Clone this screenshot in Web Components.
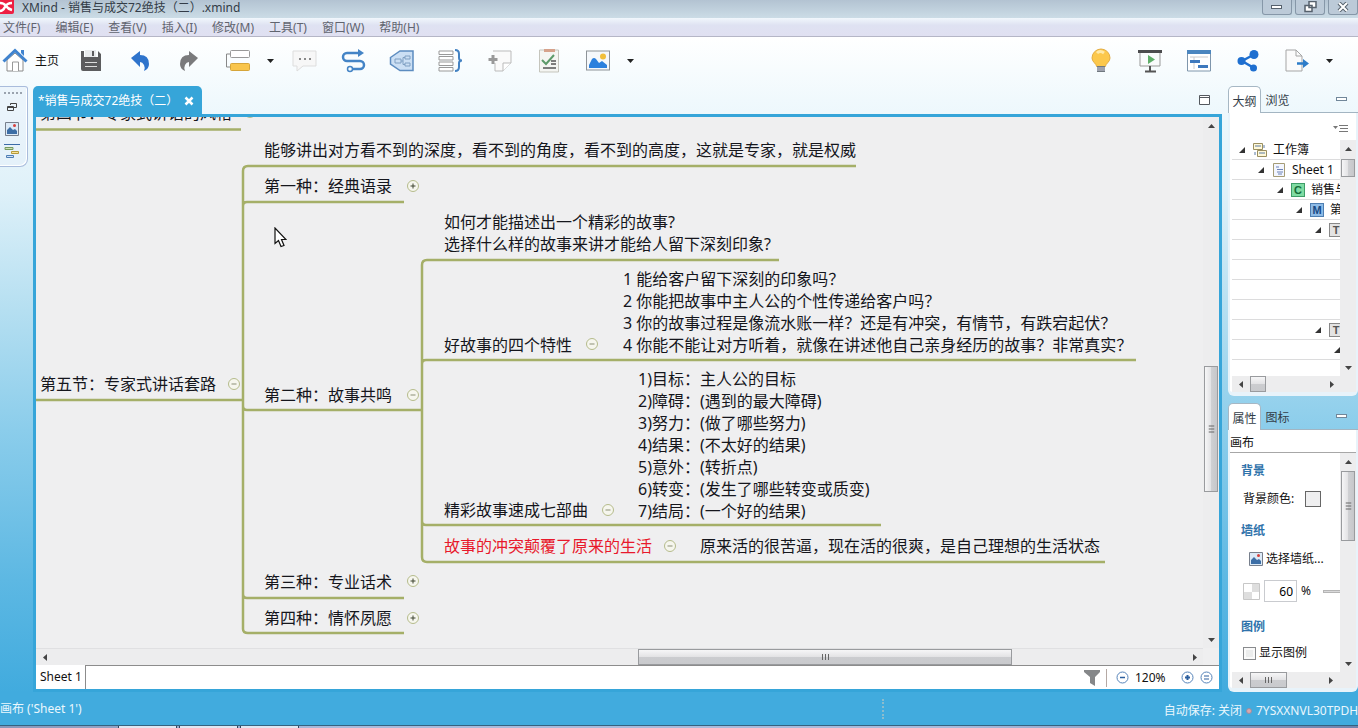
<!DOCTYPE html>
<html lang="zh-CN">
<head>
<meta charset="utf-8">
<title>XMind - 销售与成交72绝技（二）.xmind</title>
<style>
html,body{height:100%}
body{margin:0;font:12px/18px "Noto Sans","Noto Sans CJK SC",sans-serif;color:#111;overflow:hidden}
</style>
</head>
<body>
<mind-app></mind-app>
<script>
const define = (name, html, init) => customElements.define(name, class extends HTMLElement {
  constructor() {
    super();
    const t = document.createElement('template');
    t.innerHTML = `<style>*{box-sizing:border-box}button{font:inherit;color:inherit;border:0;background:none;padding:0;margin:0}svg{display:block;flex:none}</style>` + html;
    this.attachShadow({mode: 'open'}).append(t.content.cloneNode(true));
    if (init) init.call(this, this.shadowRoot);
  }
});

const icons = {
  home: '<path d="M5 12v11h16V12L13 5z" fill="#fff" stroke="#8a8a8a"/><path d="M10.500 23v-9h6v9" fill="#fff" stroke="#999"/><path d="M1.500 13.500L13 2.500l11.500 11" fill="none" stroke="#3f83cf" stroke-width="3"/><path d="M19 2h3v6l-3-3z" fill="#3f83cf"/>',
  save: '<path d="M3 3h3v7h14V3l3 3v17H5q-2 0-2-2z" fill="#5c5c5e"/><path d="M7 2h11v7H7z" fill="#e9ebed"/><path d="M14 3h2v5h-2z" fill="#5c5c5e"/><path d="M5 9h16v2H5z" fill="#5c5c5e"/><path d="M7 14h12v1H7zM7 18h12v1H7z" fill="#ddd"/>',
  undo: '<path d="M4 10L13 3v4q9 0 9 9 0 5-5 7 1.500-3 0-6-1.500-3-4-3v5z" fill="#2f74cc"/>',
  redo: '<path d="M22 10L13 3v4q-9 0-9 9 0 5 5 7-1.500-3 0-6 1.500-3 4-3v5z" fill="#7a7a7c"/>',
  topic: '<path d="M6 6H1.500v13H6" fill="none" stroke="#888"/><rect x="5.500" y="2.500" width="19" height="7" rx="1" fill="#fff" stroke="#999"/><rect x="5.500" y="15.500" width="19" height="7" rx="1" fill="#f9c54c" stroke="#d6a53a"/>',
  note: '<path d="M2 3h23v15H12l-6 5v-5H2z" fill="#f7f7f7" stroke="#ddd"/><path d="M8 10h2v2H8zM13 10h2v2h-2zM18 10h2v2h-2z" fill="#888"/>',
  relation: '<path d="M19 5H7a4 4 0 0 0 0 8h13a4 4 0 0 1 0 8h-7" fill="none" stroke="#4484c6" stroke-width="2.500"/><circle cx="10" cy="21" r="2.500" fill="none" stroke="#4484c6" stroke-width="1.500"/><path d="M18 1l6 4-6 4z" fill="#4484c6"/>',
  boundary: '<path d="M1.500 9.500L11 3h13v19.500H11L1.500 16z" fill="#cbdff4" stroke="#5c8cc0" stroke-width="1.500"/><path d="M6 11h6v4H6zM16 8h5v3h-5zM16 15h5v3h-5zM12 13h2M16 9.500h-2v7h2" fill="none" stroke="#7f9fc2"/>',
  summary: '<path d="M1 3h14v3.500H1zM1 8.500h14V12H1zM1 14h14v3.500H1zM1 19.500h14V23H1z" fill="#fff" stroke="#999"/><path d="M17 2q4 0 4 4v4q0 2.500 3 2.500-3 0-3 2.500v4q0 4-4 4" fill="none" stroke="#4482c2" stroke-width="2"/>',
  callout: '<path d="M6 3h18v12l-8 8H8v-8" fill="#fafafa" stroke="#bbb"/><path d="M16 23v-8h8" fill="#fff" stroke="#bbb"/><path d="M6 7v9M1.500 11.500h9" stroke="#999" stroke-width="3"/>',
  task: '<path d="M3.500 2h19v22h-19z" fill="#f4f5f2" stroke="#c5c5bd"/><path d="M8 1h11v3H8z" fill="#d6a28b"/><path d="M6 12l4 4 8-9" fill="none" stroke="#5d9a6a" stroke-width="2"/><path d="M15 13h5M15 16h5M7 20h13" stroke="#555" stroke-width="1.500"/>',
  image: '<rect x="1.500" y="3" width="23" height="19" fill="#f5f8fb" stroke="#8e9398"/><path d="M4 20v-3l3-6q2-2 4 0l3 4 3-2 5 4v3z" fill="#2c80dd"/><circle cx="18" cy="8.500" r="3" fill="#f1bf3b"/>',
  bulb: '<path d="M13 1a9 9 0 0 1 9 9c0 4-4 5-5 9H9c-1-4-5-5-5-9a9 9 0 0 1 9-9z" fill="#fcc84c" stroke="#e4ad42"/><path d="M9 5q3-3 7 0" stroke="#ffe9a8" stroke-width="3" fill="none"/><path d="M9 18h8v6H9z" fill="#70787f"/><path d="M9 20h8M9 22h8" stroke="#ccd"/>',
  present: '<path d="M3 4h20v14H3z" fill="#fafbfc" stroke="#999"/><path d="M1 2h24v3H1z" fill="#4c4c4e"/><path d="M11 7l7 4.500-7 4.500z" fill="#5fae69"/><path d="M13 18v5M8 23.500h11" stroke="#555" stroke-width="2"/>',
  gantt: '<path d="M1.500 3h23v20h-23z" fill="#fff" stroke="#7f96ac"/><path d="M1 2h24v4H1z" fill="#4b86bf"/><path d="M4 9h18M8 9v12" stroke="#ccc"/><path d="M4 13.500h10M12 18.500h10" stroke="#3f79bd" stroke-width="3"/>',
  share: '<path d="M20 6L7 13l12 7" fill="none" stroke="#1e6fd0" stroke-width="2.500"/><circle cx="19" cy="6.500" r="4.500" fill="#1e6fd0"/><circle cx="6.500" cy="13" r="4" fill="#1e6fd0"/><circle cx="18.500" cy="20" r="3.500" fill="#1e6fd0"/>',
  export: '<path d="M2 2h10l6 6v15H2z" fill="#fbfbfb" stroke="#a5a5a5"/><path d="M12 2v6h6" fill="none" stroke="#a5a5a5"/><path d="M13 15.500h7" stroke="#2d7cc9" stroke-width="2.500"/><path d="M19 11l6 4.500-6 4.500z" fill="#2d7cc9"/>'
};
const picture = '<svg width="14" height="14" viewBox="0 0 14 14"><path d="M.5.5h13v13H.5z" fill="#dceaf7" stroke="#777f8c"/><path d="M2 12V8l3-3 3 3 2-1 2 2v3z" fill="#3c6ea6"/><circle cx="9.500" cy="3.500" r="1.500" fill="#d6403c"/></svg>';

define('icon-button', `<style>
:host{display:block;width:49px}
:host([kind=arrow]){width:17px}:host([kind=home]){width:66px}
button{display:flex;align-items:center;justify-content:center;gap:7px;width:100%;height:48px}
:host([kind=home]) button{justify-content:flex-start;padding-left:2px}
</style><button type="button"><span></span><slot></slot></button>`, function (r) {
  const k = this.getAttribute('kind');
  r.querySelector('button').setAttribute('aria-label', k);
  r.querySelector('span').innerHTML = k === 'arrow'
    ? '<svg width="7" height="4"><path d="M0 0h7L3.500 4z" fill="#222"/></svg>'
    : `<svg width="26" height="26" viewBox="0 0 26 26">${icons[k]}</svg>`;
});

define('title-bar', `<style>
:host{display:flex;justify-content:space-between;height:18px;background:linear-gradient(#b3c3d2,#cbdce6);color:#333c47}
div{display:flex;align-items:flex-start}
.name{gap:8px;line-height:16px}
.win{gap:3px}
button{width:30px;height:15px;border:1px solid #8697a8;border-top:0;border-radius:0 0 3px 3px;display:flex;justify-content:center;align-items:center;background:#bccad8}
</style>
<div class="name"><svg width="14" height="14"><path d="M0 0h14v12q0 2-2 2H0z" fill="#ee1f42"/><path d="M0 3q4 0 6 3t6 4M0 11q3 0 5-4t7-4" fill="none" stroke="#fff" stroke-width="2.500"/></svg><span>XMind - 销售与成交72绝技（二）.xmind</span></div>
<div class="win">
<button aria-label="最小化"><svg width="12" height="6"><rect x=".5" y="1.500" width="10" height="3" fill="#fff" stroke="#56616d"/></svg></button>
<button aria-label="还原"><svg width="13" height="12"><path d="M5 .5h7v6H5zM1 4.500h7v6H1z" fill="#fff" stroke="#56616d" stroke-width="1.500"/></svg></button>
<button aria-label="关闭"><svg width="12" height="10"><path d="M2 1l8 8M10 1L2 9" stroke="#56616d" stroke-width="4"/><path d="M2 1l8 8M10 1L2 9" stroke="#fff" stroke-width="2"/></svg></button>
</div>`);

define('menu-bar', `<style>
:host{display:block;height:19px;background:linear-gradient(#f1f7fc,#dfe2f2 40%,#e0e0f1);border-bottom:1px solid #b5b6c6;color:#61646f}
nav{display:flex;gap:15px;padding-left:3px}
button{line-height:19px;height:18px;white-space:nowrap}
</style><nav></nav>`, function (r) {
  r.querySelector('nav').innerHTML = ['文件(F)','编辑(E)','查看(V)','插入(I)','修改(M)','工具(T)','窗口(W)','帮助(H)'].map(t => `<button type="button">${t}</button>`).join('');
});

define('tool-bar', `<style>
:host{display:flex;justify-content:space-between;height:49px;padding-right:20px}
div{display:flex}
</style>
<div><icon-button kind="home">主页</icon-button><icon-button kind="save"></icon-button><icon-button kind="undo"></icon-button><icon-button kind="redo"></icon-button><icon-button kind="topic"></icon-button><icon-button kind="arrow"></icon-button><icon-button kind="note"></icon-button><icon-button kind="relation"></icon-button><icon-button kind="boundary"></icon-button><icon-button kind="summary"></icon-button><icon-button kind="callout"></icon-button><icon-button kind="task"></icon-button><icon-button kind="image"></icon-button><icon-button kind="arrow"></icon-button></div>
<div><icon-button kind="bulb"></icon-button><icon-button kind="present"></icon-button><icon-button kind="gantt"></icon-button><icon-button kind="share"></icon-button><icon-button kind="export"></icon-button><icon-button kind="arrow"></icon-button></div>`);

define('side-dock', `<style>
:host{display:block;width:33px;flex:none}
div{width:28px;height:81px;border:1px solid #a9bcdc;border-left:0;border-radius:0 3px 8px 0;box-shadow:inset -1px -1px #fff;background:#e6effa80;display:flex;flex-direction:column;align-items:flex-start;padding:5px 0 0 4px;gap:8px}
button{display:flex;width:16px;height:14px;justify-content:center;align-items:center}
i{width:18px;height:0;border-top:2px dotted #9aa3ae;margin-bottom:-2px}
</style><div><i></i>
<button aria-label="还原"><svg width="10" height="10"><path d="M3.500 3V1.500h6v4H7M.5 4.500h6v4h-6zM.5 5.500h6" fill="none" stroke="#444"/></svg></button>
<button aria-label="图片">${picture}</button>
<button aria-label="甘特图"><svg width="16" height="14"><path d="M0 .5h16" stroke="#3b6ca8"/><path d="M1 3.500h8v2H1z" fill="#cfe0b5" stroke="#759b60"/><path d="M7.500 7.500h7v2h-7z" fill="#fbe49b" stroke="#b49a3b"/><path d="M2.500 11.500h7v2h-7z" fill="#cfe0f5" stroke="#4e7eb4"/></svg></button>
</div>`);

define('scroll-bar', `<style>
:host{display:flex;background:#ededee;min-width:0;min-height:0}
:host([dir=v]){flex-direction:column;width:16px}
:host([dir=h]){height:16px}
button{flex:0 0 17px;display:flex;align-items:center;justify-content:center}
.thumb{border:1px solid #999b9e;display:flex;align-items:center;justify-content:center;background:linear-gradient(#f6f6f7,#e3e3e5 48%,#cbcccf 52%,#c9cacd)}
:host([dir=v]) .thumb{background:linear-gradient(90deg,#f6f6f7,#e3e3e5 48%,#cfd0d3 52%,#c6c7ca);margin:0 1px}
:host([dir=v]) .grip{transform:rotate(90deg)}
:host([plain]) .grip{display:none}
</style><button aria-label="向前"></button><span></span><span class="thumb"><svg class="grip" width="9" height="6"><path d="M1.500 0v6M4.500 0v6M7.500 0v6" stroke="#666"/></svg></span><span></span><button aria-label="向后"></button>`, function (r) {
  const v = this.getAttribute('dir') === 'v';
  const parts = this.getAttribute('parts').split(' ');
  r.querySelectorAll('span').forEach((s, i) => { s.style.flex = parts[i] + ' 1 0'; });
  const d = v ? ['M0 4h7L3.500 0z', 'M0 0h7L3.500 4z'] : ['M4 0v7L0 3.500z', 'M0 0v7l4-3.500z'];
  r.querySelectorAll('button').forEach((b, i) => { b.innerHTML = `<svg width="${v ? 7 : 4}" height="${v ? 4 : 7}"><path d="${d[i]}" fill="#444"/></svg>`; });
});

/* Topic coordinates are on the map's own free canvas. */
const topics = [
  [4, -15, '第四节：专家式讲话的风格'],
  [4, 256, '第五节：专家式讲话套路'],
  [228, 22, '能够讲出对方看不到的深度，看不到的角度，看不到的高度，这就是专家，就是权威'],
  [228, 58, '第一种：经典语录'],
  [228, 267, '第二种：故事共鸣'],
  [228, 454, '第三种：专业话术'],
  [228, 490, '第四种：情怀夙愿'],
  [408, 94, '如何才能描述出一个精彩的故事?\n选择什么样的故事来讲才能给人留下深刻印象?'],
  [408, 217, '好故事的四个特性'],
  [587, 151, '1 能给客户留下深刻的印象吗？\n2 你能把故事中主人公的个性传递给客户吗？\n3 你的故事过程是像流水账一样？还是有冲突，有情节，有跌宕起伏？\n4 你能不能让对方听着，就像在讲述他自己亲身经历的故事？非常真实？'],
  [602, 251, '1)目标：主人公的目标\n2)障碍：(遇到的最大障碍)\n3)努力：(做了哪些努力)\n4)结果：(不太好的结果)\n5)意外：(转折点)\n6)转变：(发生了哪些转变或质变)\n7)结局：(一个好的结果)'],
  [408, 382, '精彩故事速成七部曲'],
  [408, 418, '故事的冲突颠覆了原来的生活', 'red'],
  [664, 418, '原来活的很苦逼，现在活的很爽，是自己理想的生活状态']
];
const toggles = [[214,-5,0],[198,267,0],[377,69,1],[377,278,0],[556,227,0],[572,393,0],[634,429,0],[377,464,1],[377,501,1]];

define('mind-topic', `<style>
:host{position:absolute;white-space:pre;font-size:16px;line-height:22px;color:#15161c}
:host([tone=red]){color:#e8192c}
</style><slot></slot>`);

define('topic-toggle', `<style>
:host{position:absolute;width:12px;height:12px;transform:translate(-50%,-50%)}
button{display:block}
</style><button type="button" aria-label="折叠"></button>`, function (r) {
  const open = this.hasAttribute('plus');
  r.querySelector('button').innerHTML = `<svg width="12" height="12"><circle cx="6" cy="6" r="5.500" fill="#f6f6ee" stroke="#b5bb8b"/><path d="M3.500 6h5${open ? 'M6 3.500v5' : ''}" stroke="${open ? '#3f4430' : '#8b8f76'}"/></svg>`;
});

define('mind-map', `<style>
:host{display:block;position:relative;overflow:hidden;background:#efeff0}
.lines{position:absolute;left:0;top:0}
.cursor{position:absolute;left:238px;top:110px}
</style>
<svg class="lines" width="1167" height="531" fill="none" stroke="#a5af68" stroke-width="2.500">
<path d="M0 12.500H205M0 283H206M820 49H212q-5 0-5 5v458q0 4 5 4h156M207 89q0-4 4-4h157M207 289q0 4 4 4h174M207 477q0 4 4 4h157"/>
<path d="M743 143H391q-5 0-5 5v292q0 5 5 5h678M386 247q0-4 4-4h710M386 404q0 4 4 4h455"/></svg>`, function (r) {
  const t = document.createElement('template');
  t.innerHTML = topics.map(([x, y, text, tone]) => `<mind-topic style="left:${x}px;top:${y}px" ${tone ? `tone="${tone}"` : ''}>${text}</mind-topic>`).join('') +
    toggles.map(([x, y, plus]) => `<topic-toggle ${plus ? 'plus' : ''} style="left:${x}px;top:${y}px"></topic-toggle>`).join('') +
    '<div class="cursor"><svg width="13" height="21"><path d="M1 1v15.500l3.500-3 2.500 6 3-1-2.500-6h4.500z" fill="#fff" stroke="#111" stroke-width="1.200"/></svg></div>';
  r.append(t.content);
});

define('sheet-bar', `<style>
:host{display:flex;justify-content:space-between;height:24px;background:#fff}
.sheet{padding:0 3px 0 4px;border-right:1px solid #8c8c8c;line-height:24px}
.rest{flex:1;border-top:1px solid #8c8c8c;display:flex;justify-content:flex-end;align-items:center;padding-right:6px;gap:6px}
i{width:1px;height:18px;background:#b5a9a4;margin-right:3px}
.pct{width:40px}
</style><button class="sheet" type="button">Sheet 1</button>
<div class="rest"><button aria-label="筛选"><svg width="16" height="16"><path d="M0 0h16v2l-5 5v9l-5-3V7L0 2z" fill="#858789"/></svg></button><i></i>
<button aria-label="缩小"><svg width="13" height="13"><circle cx="6.500" cy="6.500" r="5.500" fill="#fff" stroke="#5684ba"/><path d="M4 6.500h5" stroke="#2c5f9e" stroke-width="1.500"/></svg></button>
<span class="pct">120%</span>
<button aria-label="放大"><svg width="13" height="13"><circle cx="6.500" cy="6.500" r="5.500" fill="#fff" stroke="#5684ba"/><path d="M4 6.500h5M6.500 4v5" stroke="#2c5f9e" stroke-width="2"/></svg></button>
<button aria-label="实际大小"><svg width="13" height="13"><circle cx="6.500" cy="6.500" r="5.500" fill="#fff" stroke="#5684ba"/><path d="M4 5h5M4 8h5" stroke="#2c5f9e"/></svg></button></div>`);

define('editor-pane', `<style>
:host{display:flex;flex-direction:column;flex:1;min-width:0}
header{display:flex;justify-content:space-between;align-items:center;height:28px;padding-right:12px}
.tab{height:28px;display:flex;align-items:center;gap:6px;padding:2px 8px 0 5px;background:#36a5d9;color:#fff;border-radius:5px 5px 0 0}
.frame{flex:1;min-height:0;border:3px solid #36a5d9;display:grid;grid-template:minmax(0,1fr) 17px 24px / minmax(0,1fr) 16px}
.h{border-top:1px solid #e0e0e2}.corner{background:#efeff0}
scroll-bar[dir=h]{height:17px}
sheet-bar{grid-column:1 / 3}
</style>
<header><div class="tab"><span>*销售与成交72绝技（二）</span><button aria-label="关闭"><svg width="10" height="10"><path d="M1.500 1.500l7 7M8.500 1.500l-7 7" stroke="#fff" stroke-width="2.500"/></svg></button></div>
<button aria-label="最大化"><svg width="11" height="11"><path d="M.5.500h10v9H.5zM.5 2.500h10" fill="#fff" stroke="#54585e"/></svg></button></header>
<div class="frame"><mind-map></mind-map><scroll-bar dir="v" parts="233 124 140"></scroll-bar>
<scroll-bar class="h" dir="h" parts="586 373 174"></scroll-bar><span class="corner"></span><sheet-bar></sheet-bar></div>`);

define('tab-panel', `<style>
:host{display:flex;flex-direction:column;min-height:0}
header{display:flex;height:27px;align-items:stretch;position:relative}
header button{width:33px;line-height:30px;color:#333d48;text-align:center}
.on{background:#fff;border:1px solid #a6b7c4;border-bottom:0;border-radius:5px 5px 0 0}
.line{flex:1;display:flex;justify-content:flex-end;align-items:center;padding-right:11px}
.line,.off{border-bottom:1px solid #a3b5c2}
section{flex:1;min-height:0;background:#fff;border-radius:0 0 6px 6px;border:solid #e8f3fa;border-width:0 2px 4px 2px;display:flex;flex-direction:column}
</style><header><button class="on" type="button"></button><button class="off" type="button"></button><div class="line"><svg width="11" height="5"><rect x=".5" y=".5" width="10" height="3" fill="#fff" stroke="#71879a"/></svg></div></header><section><slot></slot></section>`, function (r) {
  const [a, b] = this.getAttribute('tabs').split(' ');
  r.querySelector('.on').textContent = a; r.querySelector('.off').textContent = b;
});

define('tree-row', `<style>
:host{display:block}
div{height:20px;border-bottom:1px solid #dcdcdd;display:flex;align-items:center;white-space:nowrap;overflow:hidden}
.tri{width:6px;margin-right:8px}
.ico{flex:none;width:14px;height:14px;margin-right:6px;font:bold 11px/12px "Liberation Sans",sans-serif;text-align:center;border:1px solid}
.book,.sheet{border:0}
.C{background:#7fdca3;border-color:#3f9d68;color:#136b39}
.M{background:#8ebbe6;border-color:#4e7fb2;color:#174a83}
.T{background:#e3e3e3;border-color:#888;color:#555}
</style><div></div>`, function (r) {
  const level = this.getAttribute('level'), kind = this.getAttribute('kind');
  if (level === null) return;
  const art = {
    book: '<svg width="14" height="14"><path d="M.5.500h9v6h-9zM4.500 7.500h9v6h-9z" fill="#fff8d8" stroke="#9a8f60"/><path d="M2 3h6M6 10h6M11 2v3M2 9v3" stroke="#5b7aa5"/></svg>',
    sheet: '<svg width="14" height="14"><path d="M1.500.500h11v13h-11z" fill="#f3f6ff" stroke="#a59c76"/><path d="M4 4h3M5 6.500h6M5 9h6M6 11h4" stroke="#6d83b5"/></svg>'
  };
  const d = r.querySelector('div');
  d.style.paddingLeft = 7 + level * 19 + 'px';
  d.innerHTML = `<svg class="tri" width="6" height="6"><path d="M6 0v6H0z" fill="#333"/></svg>` +
    (kind ? `<span class="ico ${kind}">${art[kind] || kind}</span>` : '') + `<span>${this.getAttribute('label') || ''}</span>`;
});

define('outline-view', `<style>
:host{display:flex;flex-direction:column;flex:1;min-height:0}
.top{height:27px;flex:none;display:flex;justify-content:flex-end;align-items:center;padding:4px 8px 0 0}
.grid{flex:1;min-height:0;display:grid;grid-template:minmax(0,1fr) 16px / minmax(0,1fr) 16px;padding-left:2px}
.view{overflow:hidden}.corner{background:#ededee}
</style><div class="top"><button aria-label="视图菜单"><svg width="15" height="9"><path d="M0 2h5L2.500 5z" fill="#777"/><path d="M6 1.500h9M7 4.500h8M6 7.500h9" stroke="#777"/></svg></button></div>
<div class="grid"><div class="view">
<tree-row level="0" kind="book" label="工作簿"></tree-row><tree-row level="1" kind="sheet" label="Sheet 1"></tree-row><tree-row level="2" kind="C" label="销售与"></tree-row><tree-row level="3" kind="M" label="第"></tree-row><tree-row level="4" kind="T"></tree-row>
<tree-row></tree-row><tree-row></tree-row><tree-row></tree-row><tree-row></tree-row><tree-row level="4" kind="T"></tree-row><tree-row level="5"></tree-row></div>
<scroll-bar dir="v" parts="2 16 184" plain></scroll-bar><scroll-bar dir="h" parts="1 15 59" plain></scroll-bar><span class="corner"></span></div>`);

define('property-view', `<style>
:host{display:flex;flex-direction:column;flex:1;min-height:0}
h2{margin:0;font:inherit;line-height:26px;height:23px;border-bottom:1px solid #a7a7a7}
h3{margin:0;font-size:12px;font-weight:bold;line-height:28px;color:#2f73ab}
.grid{flex:1;min-height:0;display:grid;grid-template:minmax(0,1fr) 16px / minmax(0,1fr) 16px;padding-left:2px}
.view{overflow:hidden;padding-top:4px;white-space:nowrap}.corner{background:#ededee}
section{padding-left:9px;margin-bottom:4px}
.row{display:flex;align-items:center;height:28px;gap:4px;padding-left:2px}
.pick{padding-left:8px}.pick button{display:flex;align-items:center;gap:3px}
.swatch{width:16px;height:16px;border:1px solid #666;background:#efeff0;margin-left:7px}
input[type=text]{flex:none;width:33px;height:22px;border:1px solid #c9cbcf;font:inherit;text-align:right;padding:0 3px 0 0;background:#fff}
input[type=checkbox]{appearance:none;width:13px;height:13px;margin:0;border:1px solid #898b8e;background:#eceded;box-shadow:inset 0 0 0 2px #fafafa}
input[type=range]{appearance:none;width:80px;height:3px;background:#d9d9da;border:1px solid #b5b5b5;margin:0 0 0 8px;flex:none}
input[type=range]::-webkit-slider-thumb{appearance:none;width:8px;height:16px;background:#ddd}
.legend{margin-top:8px}
.legend .row{height:24px;gap:3px}
</style><h2>画布</h2>
<div class="grid"><div class="view">
<section><h3>背景</h3><div class="row"><span>背景颜色:</span><button class="swatch" aria-label="背景颜色"></button></div></section>
<section><h3>墙纸</h3><div class="row pick"><button type="button">${picture}<span>选择墙纸...</span></button></div></section>
<section><div class="row"><svg width="17" height="17"><path d="M.5.500h16v16H.5z" fill="#fff" stroke="#c7c7c7"/><path d="M1 9h8v7H1zM9 1h7v8H9z" fill="#dedede"/></svg><input type="text" id="op" value="60"><label for="op">%</label><input type="range" aria-label="不透明度" value="60"></div></section>
<section class="legend"><h3>图例</h3><div class="row"><input type="checkbox" id="lg"><label for="lg">显示图例</label></div></section>
</div><scroll-bar dir="v" parts="1 68 115"></scroll-bar><scroll-bar dir="h" parts="1 37 37"></scroll-bar><span class="corner"></span></div>`);

define('status-bar', `<style>
:host{display:flex;height:33px;align-items:center;background:#41abde;color:#eaf7fd;white-space:nowrap;overflow:hidden;flex:none}
.sel{flex:884 1 0}
.right{flex:474 1 0;display:flex;justify-content:flex-end;align-items:center;gap:4px;min-width:0;padding-top:4px}
i{width:3px;height:20px;border-left:2px dotted #8bbccd}
b{width:6px;height:6px;border-radius:3px;background:#d9a8ae;border:1px solid #9a8da0}
.id{width:102px;overflow:hidden}
</style><span class="sel">画布 ('Sheet 1')</span><i></i><div class="right"><span>自动保存: 关闭</span><b></b><span class="id">7YSXXNVL30TPDHN</span></div>`);

define('task-strip', `<style>
:host{display:flex;height:3px;flex:none;gap:2px;padding-left:118px;border-top:1px solid #35627f;background:linear-gradient(90deg,#8697ba,#a9bbdc 25%,#a9bbdc 70%,#6f83ad)}
span{width:59px;background:#dfe7f2;border:solid #34465c;border-width:0 1px}
</style><span></span><span></span><span></span>`);

define('mind-app', `<style>
:host{display:flex;flex-direction:column;height:100vh;background:linear-gradient(#fff 37px,#f0f9fd 100px,#dff1f9 190px,#b5dff1 310px,#8bcdeb 430px,#5db8e3 580px,#41abde 692px)}
main{flex:1;min-height:0;display:flex}
aside{flex:none;width:130px;margin-left:6px;display:flex;flex-direction:column;gap:7px}
.outline{flex:310 1 0}.props{flex:289 1 0}
</style><title-bar></title-bar><menu-bar></menu-bar><tool-bar></tool-bar>
<main><side-dock></side-dock><editor-pane></editor-pane>
<aside><tab-panel class="outline" tabs="大纲 浏览"><outline-view></outline-view></tab-panel>
<tab-panel class="props" tabs="属性 图标"><property-view></property-view></tab-panel></aside></main>
<status-bar></status-bar><task-strip></task-strip>`);
</script>
</body>
</html>
